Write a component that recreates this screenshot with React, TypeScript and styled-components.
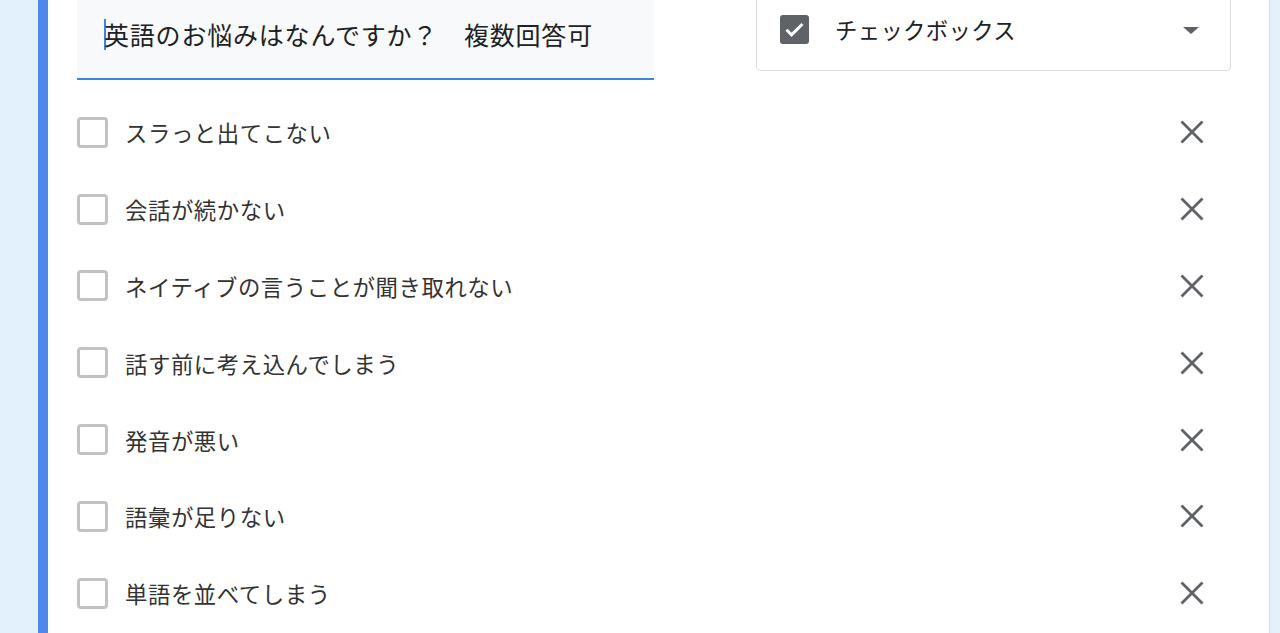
import React from 'react';
import styled, { createGlobalStyle } from 'styled-components';

const options = [
  'スラっと出てこない',
  '会話が続かない',
  'ネイティブの言うことが聞き取れない',
  '話す前に考え込んでしまう',
  '発音が悪い',
  '語彙が足りない',
  '単語を並べてしまう',
];

const CheckedIcon = () => (
  <svg width="29" height="29" viewBox="0 0 29 29">
    <rect x="0" y="0" width="29" height="29" rx="3" fill="#5f6368" />
    <path d="M6.5 14.8 L11.6 19.9 L22.5 9" stroke="#fff" strokeWidth="3" fill="none" />
  </svg>
);

const CloseIcon = () => (
  <svg width="38" height="38" viewBox="0 0 38 38">
    <path d="M8.5 8.5 L29.5 29.5 M29.5 8.5 L8.5 29.5" stroke="#5f6368" strokeWidth="2.8" fill="none" />
  </svg>
);

const App = () => {
  return (
    <>
      <GlobalStyle />
      <Page>
        <Card>
          <Header>
            <TitleField>
              <Caret />
              英語のお悩みはなんですか？　複数回答可
            </TitleField>
            <TypeSelect>
              <CheckedIcon />
              <TypeLabel>チェックボックス</TypeLabel>
              <Arrow />
            </TypeSelect>
          </Header>
          <OptionList>
            {options.map((label) => (
              <OptionRow key={label}>
                <EmptyBox />
                <OptionText>{label}</OptionText>
                <RemoveButton>
                  <CloseIcon />
                </RemoveButton>
              </OptionRow>
            ))}
          </OptionList>
        </Card>
      </Page>
    </>
  );
};

export default App;

const GlobalStyle = createGlobalStyle`
  html, body {
    margin: 0;
    padding: 0;
    height: 100%;
    overflow: hidden;
    background: #e2f1fb;
  }
  body {
    font-family: "Noto Sans CJK JP", "Noto Sans", sans-serif;
  }
`;

const Page = styled.div`
  display: flex;
  height: 633px;
  padding-left: 38px;
  padding-right: 10px;
`;

const Card = styled.div`
  flex: 1;
  display: flex;
  flex-direction: column;
  background: #fff;
  border-left: 10px solid #5087ec;
  border-right: 1px solid #dadce0;
  padding: 0 38px 0 29px;
`;

const Header = styled.div`
  display: flex;
  align-items: flex-start;
  justify-content: space-between;
`;

const TitleField = styled.div`
  display: flex;
  align-items: center;
  width: 577px;
  height: 80px;
  box-sizing: border-box;
  padding: 0 0 10px 27px;
  background: #f8f9fa;
  border-bottom: 2px solid #3d86d9;
  font-size: 25px;
  letter-spacing: 0.8px;
  color: #202124;
  white-space: nowrap;
`;

const Caret = styled.span`
  display: inline-block;
  width: 1.5px;
  height: 31px;
  margin-right: -1.5px;
  background: #3d86d9;
`;

const TypeSelect = styled.div`
  display: flex;
  align-items: center;
  width: 475px;
  height: 71px;
  box-sizing: border-box;
  padding: 0 31px 12px 23px;
  border: 1px solid #dadce0;
  border-top: none;
  border-radius: 0 0 5px 5px;
`;

const TypeLabel = styled.span`
  flex: 1;
  margin-left: 26px;
  font-size: 22.4px;
  letter-spacing: 0.3px;
  color: #202124;
`;

const Arrow = styled.span`
  width: 0;
  height: 0;
  border-left: 8px solid transparent;
  border-right: 8px solid transparent;
  border-top: 7px solid #5f6368;
  margin-top: 2px;
`;

const OptionList = styled.div`
  display: flex;
  flex-direction: column;
  padding-top: 14px;
`;

const OptionRow = styled.div`
  display: flex;
  align-items: center;
  height: 76.8px;
  padding-right: 20px;
`;

const EmptyBox = styled.span`
  width: 31px;
  height: 31px;
  box-sizing: border-box;
  border: 3px solid #c2c2c2;
  border-radius: 4px;
  flex-shrink: 0;
`;

const OptionText = styled.span`
  flex: 1;
  margin-left: 17px;
  font-size: 22.4px;
  letter-spacing: 0.55px;
  color: #333;
`;

const RemoveButton = styled.span`
  display: flex;
  width: 38px;
  height: 38px;
  cursor: pointer;
`;
